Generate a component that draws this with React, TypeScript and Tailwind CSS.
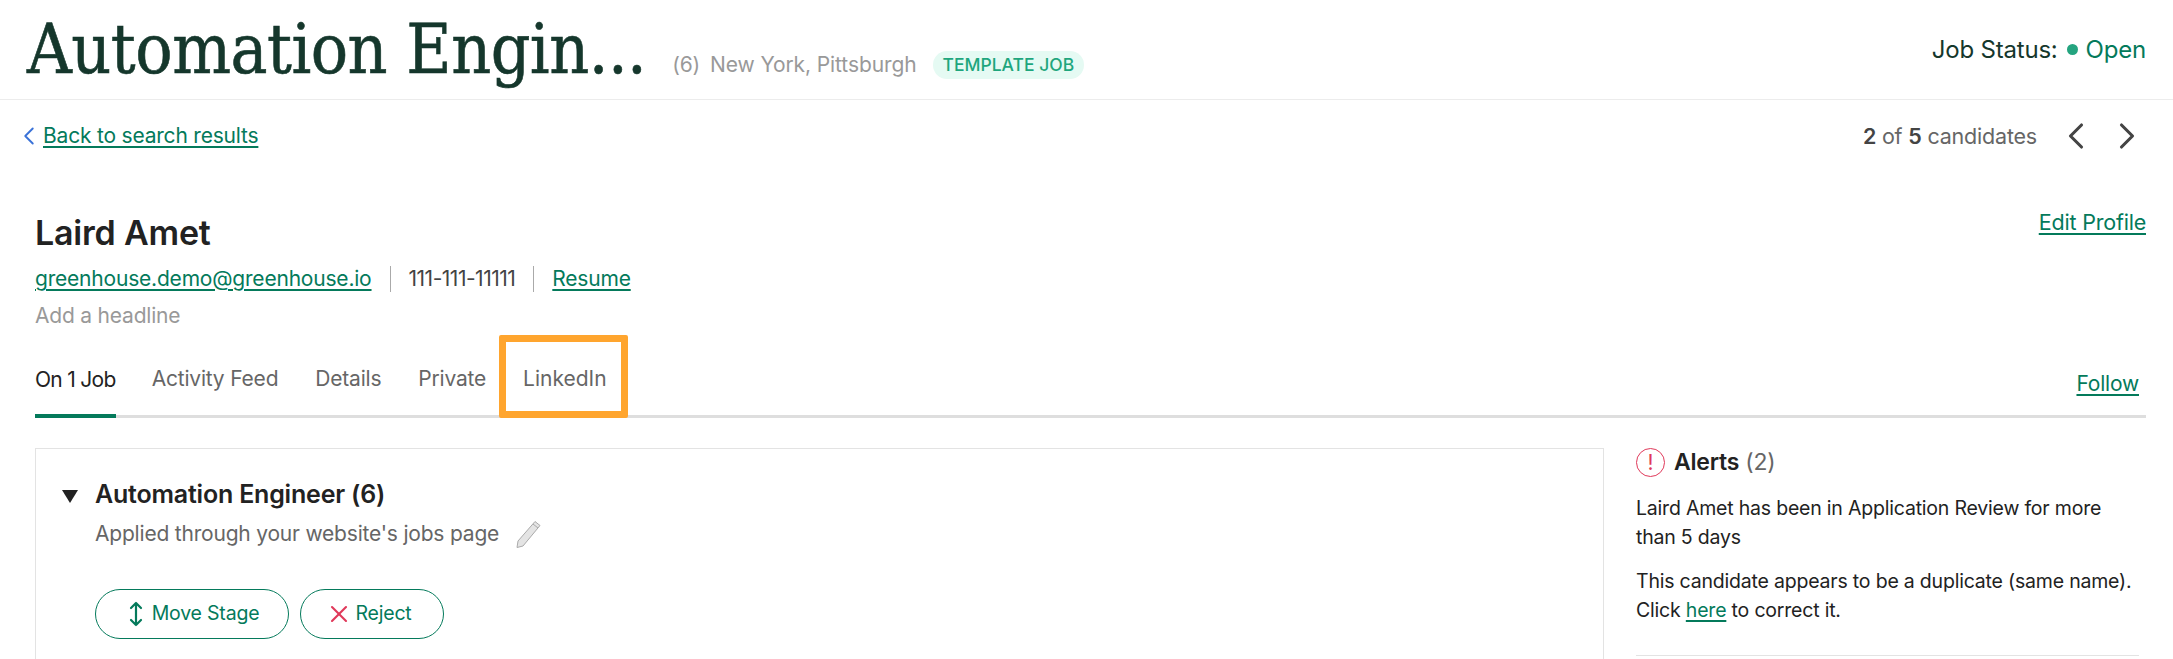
import { ChevronLeft, ChevronRight, X } from "lucide-react";

const SANS = "font-['Inter','Liberation_Sans',sans-serif]";

function GreenLink({ children, className = "" }: { children: React.ReactNode; className?: string }) {
  return (
    <a className={"text-[#047a5b] underline underline-offset-[3px] decoration-[2px] " + className}>
      {children}
    </a>
  );
}

const TABS = ["Activity Feed", "Details", "Private"];

export default function App() {
  return (
    <div className={SANS + " h-[659px] w-[2173px] overflow-hidden bg-white text-[21px] tracking-[-0.2px] text-[#222]"}>
      {/* Top job bar */}
      <header className="flex h-[100px] items-center justify-between border-b border-[#ececec] pl-[27px] pr-[27px]">
        <div className="flex items-center">
          <h1 className="font-['DejaVu_Serif_Condensed','DejaVu_Serif',serif] text-[69px] leading-none tracking-[-0.5px] text-[#15372c] [-webkit-text-stroke:0.6px_#15372c]">Automation Engin...</h1>
          <span className="ml-[26px] mt-[31px] text-[#999]">(6)</span>
          <span className="ml-[10px] mt-[31px] tracking-[-0.1px] text-[#999]">New York, Pittsburgh</span>
          <span className="ml-[16px] mt-[31px] rounded-full bg-[#e5faf3] px-[10px] py-[1px] text-[17.5px] font-medium tracking-normal text-[#1ea67d]">
            TEMPLATE JOB
          </span>
        </div>
        <div className="flex items-center text-[24px] text-[#15372c]">
          Job Status:
          <span className="ml-[9px] mr-[8px] h-[11px] w-[11px] rounded-full bg-[#24a47f]" />
          <span className="text-[#047a5b]">Open</span>
        </div>
      </header>

      {/* Back link + pager */}
      <div className="flex h-[72px] items-center justify-between pl-[14px] pr-[24px]">
        <div className="flex items-center">
          <ChevronLeft className="-mr-px h-[30px] w-[30px] text-[#3a72d8]" strokeWidth={1.5} />
          <GreenLink>Back to search results</GreenLink>
        </div>
        <div className="flex items-center text-[#666]">
          <span className="text-[21.5px]"><b className="font-semibold text-[#444]">2</b> of <b className="font-semibold text-[#444]">5</b> candidates</span>
          <ChevronLeft className="ml-[17px] h-[44px] w-[44px] text-[#444]" strokeWidth={1.7} />
          <ChevronRight className="ml-[7px] h-[44px] w-[44px] text-[#444]" strokeWidth={1.7} />
        </div>
      </div>

      <main className="pl-[35px] pr-[27px] pt-[41px]">
        {/* Candidate */}
        <div className="flex items-start justify-between">
          <div>
            <h2 className="text-[34px] font-semibold leading-[40px]">Laird Amet</h2>
            <div className="mt-[12px] flex h-[28px] items-center">
              <GreenLink>greenhouse.demo@greenhouse.io</GreenLink>
              <span className="mx-[18px] h-[26px] w-px bg-[#aaa]" />
              <span className="tracking-[-0.5px] text-[#444]">111-111-11111</span>
              <span className="mx-[18px] h-[26px] w-px bg-[#aaa]" />
              <GreenLink>Resume</GreenLink>
            </div>
            <p className="mt-[10px] leading-[26px] text-[#999]">Add a headline</p>
          </div>
          <GreenLink className="-mt-[7px] text-[21.5px]">Edit Profile</GreenLink>
        </div>

        {/* Tabs */}
        <div className="relative mt-[16px] flex h-[73px] items-stretch justify-between border-b-[3px] border-[#dedede]">
          <div className="flex">
            <div className="-mb-[3px] mr-[36px] flex items-center border-b-[4px] border-[#047a5b] pt-[1px] tracking-[-0.7px] text-[#222]">On 1 Job</div>
            {TABS.map((t) => (
              <div key={t} className="mr-[37px] flex items-center pb-[2px] text-[#666]">{t}</div>
            ))}
            <div className="relative flex items-center pb-[2px] tracking-normal text-[#666]">
              LinkedIn
              <span className="pointer-events-none absolute -bottom-[3px] -left-[24px] -right-[21px] -top-[10px] rounded-[2px] border-[7px] border-[#ffa52e]" />
            </div>
          </div>
          <GreenLink className="mr-[7px] mt-[23px] self-start">Follow</GreenLink>
        </div>

        {/* Body */}
        <div className="mt-[30px] flex gap-[32px]">
          <section className="h-[300px] w-[1569px] border border-[#e3e3e3] pl-[26px] pt-[30px]">
            <div className="flex items-center">
              <span className="mr-[17px] mt-[5px] h-0 w-0 border-x-[8px] border-t-[13px] border-x-transparent border-t-[#222]" />
              <h3 className="text-[25px] font-semibold leading-[30px]">Automation Engineer (6)</h3>
            </div>
            <div className="ml-[33px] mt-[9px] flex items-center text-[#666]">
              Applied through your website's jobs page
              <svg className="ml-[15px] h-[28px] w-[28px]" viewBox="0 0 28 28">
                <path d="M21 1.5l5 4L9 26l-6 1.5 1-6.5z" fill="#e4e4e4" stroke="#aaa" strokeWidth="1" />
                <path d="M19 4l5 4" stroke="#aaa" strokeWidth="1" fill="none" />
              </svg>
            </div>
            <div className="ml-[33px] mt-[39px] flex gap-[11px] text-[19.5px]">
              <button className="flex h-[50px] w-[194px] items-center justify-center gap-[9px] rounded-full border border-[#047a5b] pl-[4px] text-[#047a5b]">
                <svg className="h-[26px] w-[14px]" viewBox="0 0 14 26" fill="none" stroke="currentColor" strokeWidth="2.2" strokeLinecap="round" strokeLinejoin="round">
                  <path d="M7 2v22M2 7l5-5 5 5M2 19l5 5 5-5" />
                </svg>
                Move Stage
              </button>
              <button className="flex h-[50px] w-[144px] items-center justify-center gap-[9px] rounded-full border border-[#047a5b] text-[#047a5b]">
                <X className="-mx-[7px] h-[28px] w-[28px] text-[#e0395a]" strokeWidth={1.8} />
                Reject
              </button>
            </div>
          </section>

          <aside className="w-[503px]">
            <div className="flex items-center text-[23px] leading-[29px]">
              <span className="mr-[9px] flex h-[29px] w-[29px] items-center justify-center rounded-full border-[1.5px] border-[#e0395a] text-[21px] text-[#e0395a]">!</span>
              <span className="font-semibold">Alerts</span>
              <span className="ml-[6px] text-[#666]">(2)</span>
            </div>
            <div className="mt-[17px] text-[19.5px] leading-[29px]">
              <p className="w-[500px]">Laird Amet has been in Application Review for more than 5 days</p>
              <p className="mt-[15px]">
                This candidate appears to be a duplicate (same name). Click <GreenLink>here</GreenLink> to correct it.
              </p>
            </div>
            <div className="mt-[30px] border-t border-[#e3e3e3]" />
          </aside>
        </div>
      </main>
    </div>
  );
}
